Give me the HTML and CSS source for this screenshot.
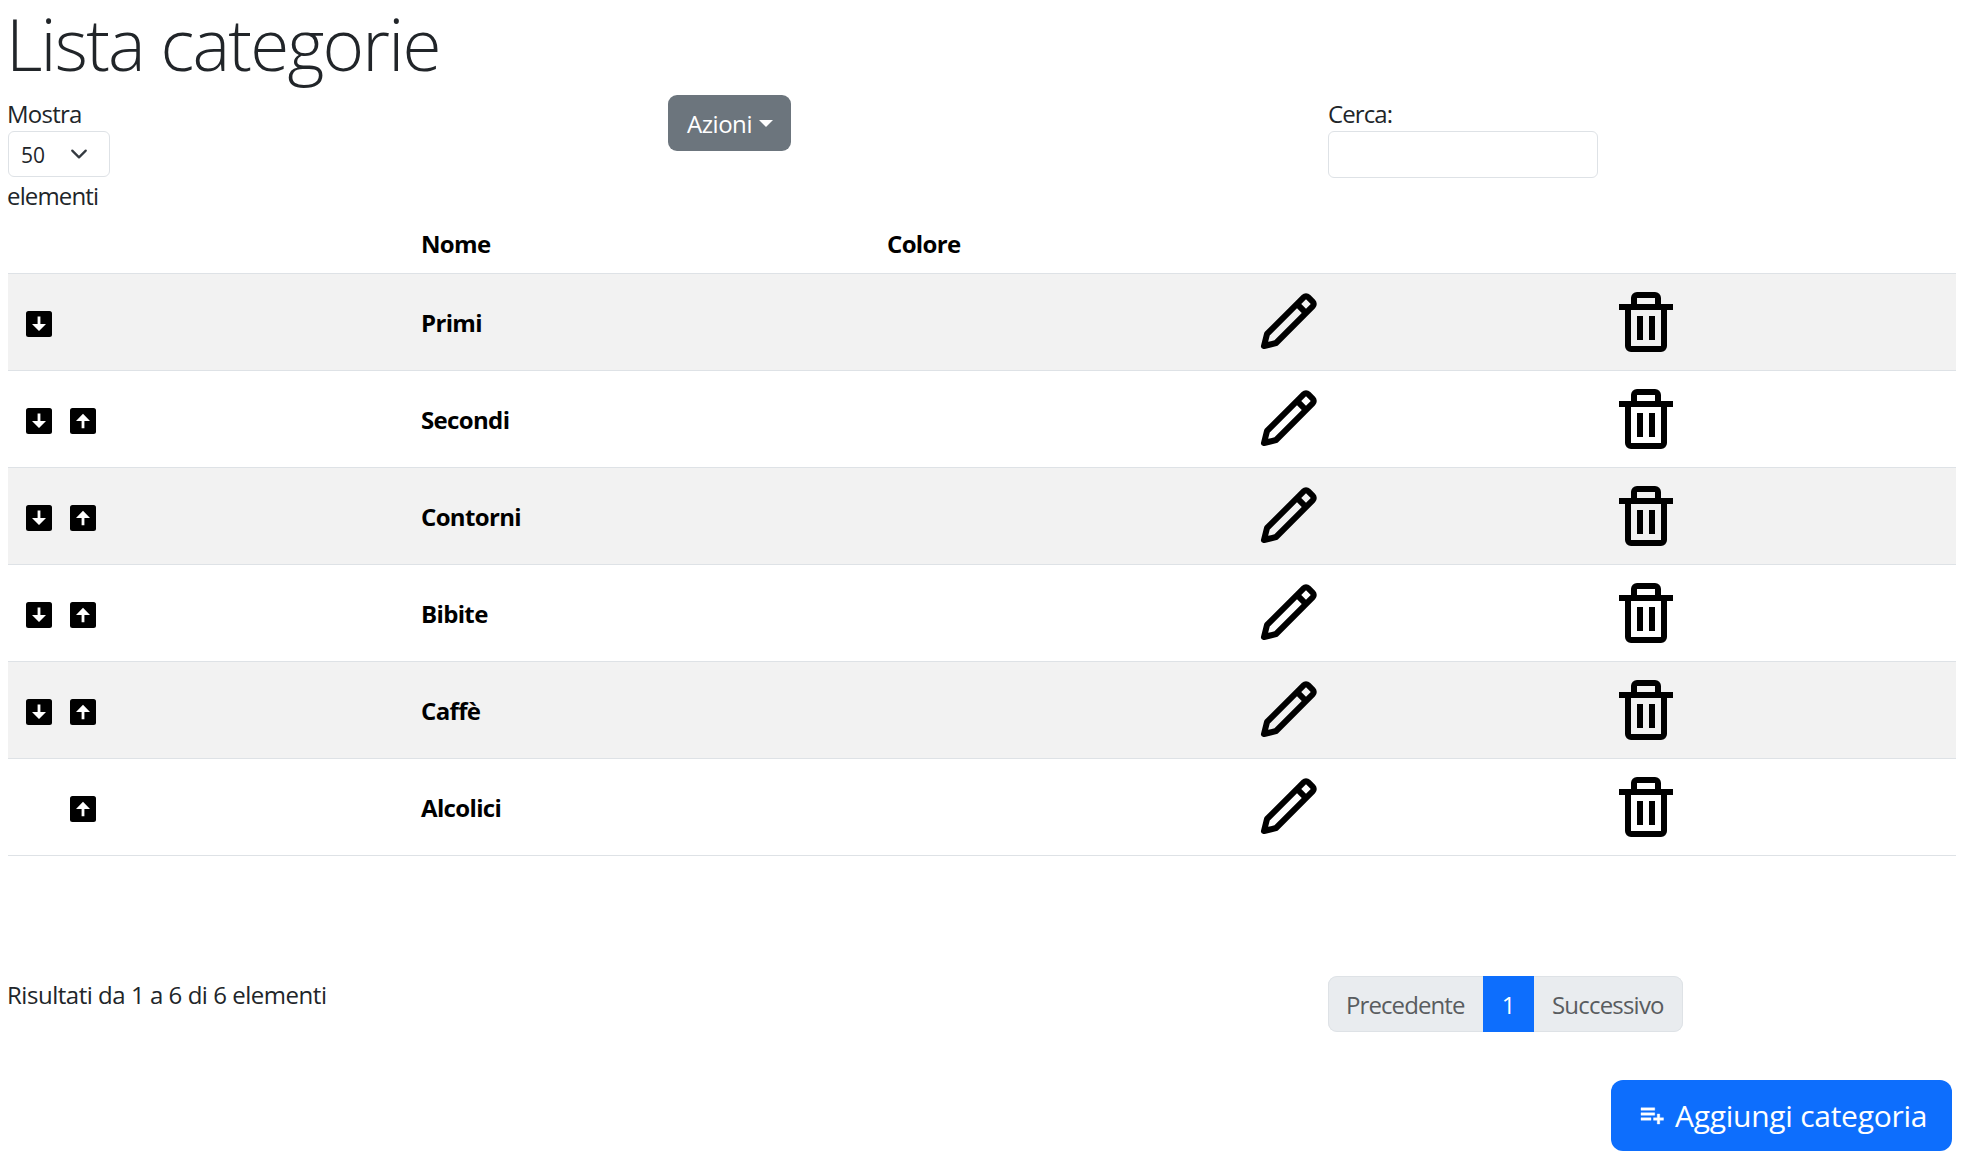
FILE: index.html
```html
<!DOCTYPE html>
<html lang="it">
<head>
<meta charset="utf-8">
<title>Lista categorie</title>
<link rel="stylesheet" href="styles.css">
</head>
<body>
<svg class="sprite" aria-hidden="true">
  <symbol id="down" viewBox="0 0 26 26"><rect width="26" height="26" rx="2.5"/><path fill="#fff" d="M11.6 5.5h2.8V13H20l-7 7-7-7h5.6z"/></symbol>
  <symbol id="up" viewBox="0 0 26 26"><rect width="26" height="26" rx="2.5"/><path fill="#fff" d="M11.6 20.2h2.8V13H20l-7-7.3L6 13h5.6z"/></symbol>
  <symbol id="pencil" viewBox="0 0 24 24"><path d="M4 21a1 1 0 0 0 .24 0l4-1a1 1 0 0 0 .47-.26L21 7.41a2 2 0 0 0 0-2.82L19.42 3a2 2 0 0 0-2.83 0L4.3 15.29a1.06 1.06 0 0 0-.27.47l-1 4A1 1 0 0 0 3.76 21 .93.93 0 0 0 4 21zM18 4.41 19.59 6 18 7.59 16.42 6zM5.91 16.51 15 7.41 16.59 9l-9.1 9.1-2.11.52z"/></symbol>
  <symbol id="trash" viewBox="0 0 24 24"><path d="M5 20a2 2 0 0 0 2 2h10a2 2 0 0 0 2-2V8h2V6h-4V4a2 2 0 0 0-2-2H9a2 2 0 0 0-2 2v2H3v2h2zM9 4h6v2H9zM8 8h9v12H7V8z"/><path d="M9 10h2v8H9zm4 0h2v8h-2z"/></symbol>
  <symbol id="list-plus" viewBox="0 0 24 24"><path d="M19 15v-3h-2v3h-3v2h3v3h2v-3h3v-2zM4 7h11v2H4zm0 4h11v2H4zm0 4h8v2H4z"/></symbol>
</svg>
<h1 class="title">Lista categorie</h1>
<div class="row toolbar">
  <div class="col">
    <div class="mostra">Mostra</div>
    <div class="select"><span>50</span><svg class="chevron" viewBox="0 0 16 16"><path d="m2 5 6 6 6-6"/></svg></div>
    <div class="elementi">elementi</div>
  </div>
  <div class="col"><button class="btn azioni">Azioni<span class="caret"></span></button></div>
  <div class="col">
    <div class="cerca">Cerca:</div>
    <input class="search" type="search" aria-label="Cerca">
  </div>
</div>
<div class="table">
  <div class="tr head"><span></span><span>Nome</span><span>Colore</span><span></span><span></span></div>
  <div class="tr odd"><span class="move"><svg><use href="#down"/></svg></span><span>Primi</span><span></span><span><svg class="ico"><use href="#pencil"/></svg></span><span><svg class="ico"><use href="#trash"/></svg></span></div>
  <div class="tr"><span class="move"><svg><use href="#down"/></svg><svg><use href="#up"/></svg></span><span>Secondi</span><span></span><span><svg class="ico"><use href="#pencil"/></svg></span><span><svg class="ico"><use href="#trash"/></svg></span></div>
  <div class="tr odd"><span class="move"><svg><use href="#down"/></svg><svg><use href="#up"/></svg></span><span>Contorni</span><span></span><span><svg class="ico"><use href="#pencil"/></svg></span><span><svg class="ico"><use href="#trash"/></svg></span></div>
  <div class="tr"><span class="move"><svg><use href="#down"/></svg><svg><use href="#up"/></svg></span><span>Bibite</span><span></span><span><svg class="ico"><use href="#pencil"/></svg></span><span><svg class="ico"><use href="#trash"/></svg></span></div>
  <div class="tr odd"><span class="move"><svg><use href="#down"/></svg><svg><use href="#up"/></svg></span><span>Caffè</span><span></span><span><svg class="ico"><use href="#pencil"/></svg></span><span><svg class="ico"><use href="#trash"/></svg></span></div>
  <div class="tr"><span class="move last"><svg><use href="#up"/></svg></span><span>Alcolici</span><span></span><span><svg class="ico"><use href="#pencil"/></svg></span><span><svg class="ico"><use href="#trash"/></svg></span></div>
</div>
<div class="row footer">
  <div class="col info">Risultati da 1 a 6 di 6 elementi</div>
  <div class="col"></div>
  <div class="col"><div class="pager"><span class="prev">Precedente</span><span class="current">1</span><span class="next">Successivo</span></div></div>
</div>
<div class="actions"><button class="btn add"><svg><use href="#list-plus"/></svg>Aggiungi categoria</button></div>
</body>
</html>
```
FILE: styles.css
```css
* { box-sizing: border-box; }
body {
  margin: 0;
  padding: 0 20px 0 8px;
  font: 400 24px/36px "Open Sans", "Noto Sans", sans-serif;
  color: #212529;
  background: #fff;
}
.sprite { display: none; }
svg { display: block; flex: none; }
.title {
  margin: 0 0 7px -2px;
  font-size: 71px;
  font-weight: 300;
  line-height: 88px;
  letter-spacing: -1.8px;
}
.row { display: grid; grid-template-columns: 660px 660px 1fr; }
.toolbar { height: 118px; }
.mostra, .cerca { height: 36px; padding-top: 1px; }
.mostra { margin-left: -1px; letter-spacing: -.75px; }
.elementi { letter-spacing: -.85px; margin: 1px 0 0 -1px; }
.cerca { letter-spacing: -.9px; }
.select {
  display: flex;
  align-items: center;
  justify-content: space-between;
  width: 102px;
  height: 46px;
  padding: 1px 21px 0 12px;
  border: 1px solid #dee2e6;
  border-radius: 6px;
  font-size: 21px;
}
.chevron {
  width: 18px;
  height: 18px;
  margin-bottom: 1px;
  fill: none;
  stroke: #343a40;
  stroke-width: 2;
  stroke-linecap: round;
  stroke-linejoin: round;
}
.search {
  display: block;
  width: 270px;
  height: 47px;
  border: 1px solid #dee2e6;
  border-radius: 6px;
  background: #fff;
  outline: 0;
}
.btn {
  display: flex;
  align-items: center;
  border: 0;
  font: inherit;
  color: #fff;
}
.azioni {
  width: 123px;
  height: 56px;
  padding: 2px 0 0 19px;
  border-radius: 9px;
  background: #6c757d;
  letter-spacing: -.45px;
}
.caret {
  margin: 0 0 2px 6.5px;
  border: 7px solid transparent;
  border-top-color: #fff;
  border-bottom: 0;
}
.tr {
  display: grid;
  grid-template-columns: 401px 466px 365px 358px 1fr;
  align-items: center;
  height: 97px;
  border-bottom: 1px solid #dee2e6;
  font-weight: 700;
  letter-spacing: -.65px;
  color: #000;
}
.tr > span { padding: 1px 12px 0; }
.head { height: 61px; }
.odd { background: #f2f2f2; }
.tr > .move { display: flex; gap: 18px; padding: 4px 18px 0; }
.tr > .last { padding-left: 62px; }
.move svg { width: 26px; height: 26px; }
.tr > span:nth-child(n+4) { padding-top: 0; }
.ico { width: 72px; height: 72px; }
.footer { margin-top: 120px; height: 104px; }
.info { padding-top: 1px; margin-left: -1px; letter-spacing: -.47px; }
.pager {
  display: flex;
  width: 355px;
  height: 56px;
  overflow: hidden;
  line-height: 56px;
  border-radius: 9px;
  background: #e9ecef;
  box-shadow: inset 0 0 0 1px #dee2e6;
  color: #595c5f;
}
.pager span { padding-top: 1px; }
.prev { width: 155px; padding-left: 18px; letter-spacing: -.9px; }
.current { width: 51px; text-align: center; background: #0d6efd; color: #fff; }
.next { padding-left: 18px; letter-spacing: -.8px; }
.actions { display: flex; justify-content: flex-end; padding-right: 4px; }
.add {
  width: 341px;
  height: 71px;
  padding: 1px 0 0 25px;
  gap: 9px;
  border-radius: 12px;
  background: #0d6efd;
  font-size: 30px;
  letter-spacing: -.27px;
  white-space: nowrap;
}
.add svg { width: 30px; height: 30px; margin-bottom: 5px; fill: #fff; stroke: #fff; stroke-width: .3; }
```
